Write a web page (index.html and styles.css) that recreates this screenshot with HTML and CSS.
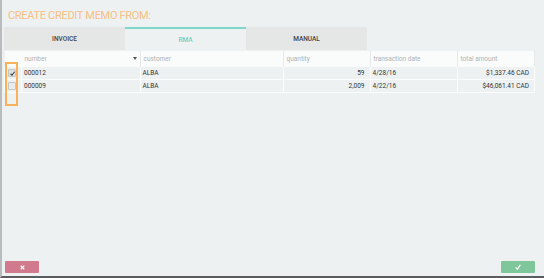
FILE: index.html
```html
<!DOCTYPE html>
<html lang="en">
<head>
    <meta charset="UTF-8">
    <title>Create Credit Memo</title>
    <link rel="stylesheet" href="styles.css">
</head>
<body>
    <div class="frame">
        <h1 class="title">CREATE CREDIT MEMO FROM:</h1>

        <div class="tabs">
            <div class="tab">INVOICE</div>
            <div class="tab active">RMA</div>
            <div class="tab">MANUAL</div>
        </div>

        <div class="grid-wrap">
            <table class="grid">
                <thead>
                    <tr>
                        <th class="col-check"></th>
                        <th class="col-number">number <span class="sort"></span></th>
                        <th class="col-customer">customer</th>
                        <th class="col-qty">quantity</th>
                        <th class="col-date">transaction date</th>
                        <th class="col-total">total amount</th>
                    </tr>
                </thead>
                <tbody>
                    <tr>
                        <td class="col-check"><span class="box checked">
                            <svg width="5" height="5" viewBox="0 0 10 10"><path d="M1 5.5 L4 8.5 L9 1.5" fill="none" stroke="#444" stroke-width="2.2"/></svg>
                        </span></td>
                        <td>000012</td>
                        <td>ALBA</td>
                        <td class="num">59</td>
                        <td>4/28/16</td>
                        <td class="num">$1,337.46 CAD</td>
                    </tr>
                    <tr>
                        <td class="col-check"><span class="box"></span></td>
                        <td>000009</td>
                        <td>ALBA</td>
                        <td class="num">2,009</td>
                        <td>4/22/16</td>
                        <td class="num">$46,061.41 CAD</td>
                    </tr>
                </tbody>
            </table>
            <div class="highlight"></div>
        </div>

        <div class="actions">
            <button class="btn cancel">
                <svg width="5" height="5" viewBox="0 0 10 10"><path d="M1.5 1.5 L8.5 8.5 M8.5 1.5 L1.5 8.5" stroke="#fff" stroke-width="2.4"/></svg>
            </button>
            <button class="btn ok">
                <svg width="6" height="6" viewBox="0 0 10 10"><path d="M1 5.5 L4 8.5 L9 1.5" fill="none" stroke="#fff" stroke-width="2"/></svg>
            </button>
        </div>
    </div>
</body>
</html>
```

FILE: styles.css
```css
body {
    margin: 0;
    background: #eef1f2;
    font-family: Roboto, "Liberation Sans", sans-serif;
}
.frame {
    height: 276px;
    border-left: 2px solid #b9bcbd;
    border-bottom: 2px solid #5a5c5d;
    display: flex;
    flex-direction: column;
}
.title {
    margin: 10px 0 0 6px;
    font-size: 11px;
    line-height: 11px;
    font-weight: 400;
    color: #f8c083;
    letter-spacing: -0.3px;
}
.tabs {
    display: flex;
    margin: 6px 0 0 2px;
    height: 23px;
}
.tab {
    width: 121px;
    background: #e5e6e6;
    color: #444;
    font-size: 6.5px;
    font-weight: 500;
    display: flex;
    align-items: center;
    justify-content: center;
    box-sizing: border-box;
    padding-top: 1px;
}
.tab.active {
    background: #eef1f2;
    border-top: 2px solid #7fd6ca;
    color: #6fcfc3;
    padding-top: 0;
}
.grid-wrap {
    position: relative;
    margin: 1px 9px 0 2px;
}
.grid {
    width: 531px;
    border-collapse: collapse;
    font-size: 6.5px;
}
.grid th {
    height: 16px;
    padding: 0 0 0 3px;
    text-align: left;
    font-weight: 400;
    color: #b0b3b4;
    background: #fafbfb;
    border-right: 1px solid #e6e9ea;
    position: relative;
}
.grid td {
    height: 12px;
    padding: 0 5px 0 2px;
    color: #333;
    border: 1px solid #fbfcfc;
    border-top: 0;
}
.grid td.num {
    text-align: right;
}
.col-check {
    width: 13px;
}
.grid .col-check {
    padding: 0 0 0 3px;
    border-right: 0;
}
.col-number { width: 115px; }
.col-customer { width: 139px; }
.col-qty { width: 83px; }
.col-date { width: 83px; }
.sort {
    position: absolute;
    right: 3px;
    top: 6px;
    border-left: 2px solid transparent;
    border-right: 2px solid transparent;
    border-top: 3px solid #555;
}
.box {
    display: flex;
    align-items: center;
    justify-content: center;
    width: 6px;
    height: 6px;
    border: 1px solid #c4c7c8;
    border-radius: 1px;
    background: #e9ebec;
}
.box.checked {
    background: #dfe1e2;
}
.highlight {
    position: absolute;
    left: 1px;
    top: 11px;
    width: 9px;
    height: 40px;
    border: 2px solid #f9b05a;
}
.actions {
    margin-top: auto;
    display: flex;
    justify-content: space-between;
    padding: 0 9px 3px 3px;
}
.btn {
    width: 34px;
    height: 12px;
    border: 0;
    border-radius: 1px;
    padding: 0;
    display: flex;
    align-items: center;
    justify-content: center;
}
.btn.cancel {
    background: #d27a8d;
}
.btn.ok {
    background: #7fc79b;
}
```
